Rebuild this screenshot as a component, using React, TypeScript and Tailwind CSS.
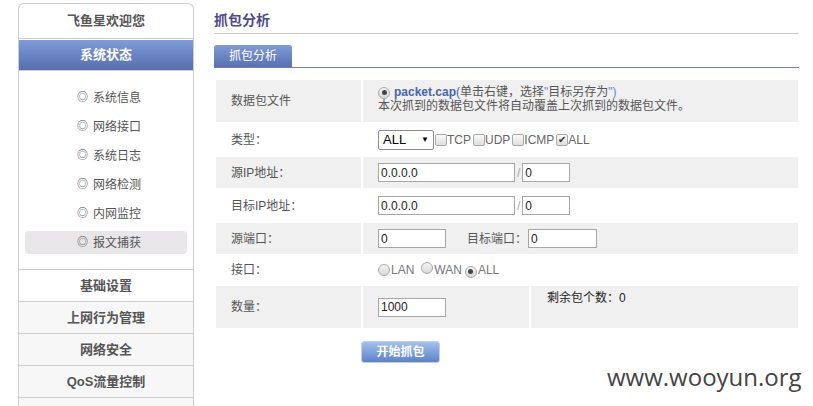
import React from 'react';

const menuItems = ['系统信息', '网络接口', '系统日志', '网络检测', '内网监控', '报文捕获'];
const groups = ['基础设置', '上网行为管理', '网络安全', 'QoS流量控制'];

const Radio = ({ checked = false }: { checked?: boolean }) => (
  <span className="inline-flex w-[12px] h-[12px] rounded-full border border-[#a9a9a9] bg-gradient-to-b from-[#f4f4f4] to-[#d9d9d9] items-center justify-center shrink-0">
    {checked && <span className="w-[5px] h-[5px] rounded-full bg-[#444]" />}
  </span>
);

const Check = ({ checked = false }: { checked?: boolean }) => (
  <span className="inline-flex w-[12px] h-[12px] rounded-[2px] border border-[#a9a9a9] bg-gradient-to-b from-[#fafafa] to-[#dedede] items-center justify-center shrink-0 text-[10px] leading-none text-[#333]">
    {checked && '✔'}
  </span>
);

const Input = ({ value, w }: { value: string; w: string }) => (
  <div className={`${w} h-[19px] border border-[#a6a6a6] bg-white flex items-center pl-[2px] text-[12px] text-[#222] leading-none`}>
    {value}
  </div>
);

const Sidebar = () => (
  <aside className="ml-[18px] mt-[3px] w-[176px] shrink-0 border border-b-0 border-[#cccccc] rounded-t-[6px] bg-white">
    <div className="h-[35px] flex items-center justify-center text-[13px] font-bold text-[#555] border-b border-[#cccccc]">
      飞鱼星欢迎您
    </div>
    <div className="mt-px h-[31px] flex items-center justify-center text-[13px] font-bold text-white bg-gradient-to-b from-[#7f9bda] to-[#566eae] border-b border-[#cfcfcf]">
      系统状态
    </div>
    <div className="pt-[15px] pb-[15px] flex flex-col gap-[6px] border-b border-[#cccccc]">
      {menuItems.map((item) => (
        <div
          key={item}
          className={`mx-[6px] h-[23px] rounded-[4px] flex items-center pl-[52px] gap-[5px] text-[12px] text-[#555] ${
            item === '报文捕获' ? 'bg-[#e8e6e8]' : ''
          }`}
        >
          <span className="text-[11px] text-[#444]">◎</span>
          <span>{item}</span>
        </div>
      ))}
    </div>
    {groups.map((g, i) => (
      <div
        key={g}
        className={`h-[32px] flex items-center justify-center text-[13px] font-bold text-[#555] border-b border-[#cccccc] ${
          i === 0 ? 'bg-white' : 'bg-[#f7f7f7]'
        }`}
      >
        {g}
      </div>
    ))}
    <div className="h-[32px] bg-[#f7f7f7]" />
  </aside>
);

const Label = ({ text }: { text: string }) => (
  <div className="w-[145px] shrink-0 pl-[15px] flex items-center text-[12px] text-[#555]">{text}</div>
);

export default function App() {
  return (
    <div className="w-[813px] h-[406px] overflow-hidden bg-white flex relative font-['Liberation_Sans','Noto_Sans_CJK_SC',sans-serif]">
      <Sidebar />

      <main className="ml-[20px] w-[585px] shrink-0">
        <div className="pt-[12px] pb-[5px] leading-[16px] text-[14px] font-bold text-[#4f4a8c] border-b border-[#cccccc]">
          抓包分析
        </div>

        <div className="mt-[11px] flex items-end border-b border-[#6a7fbf]">
          <div className="w-[78px] h-[22px] rounded-t-[3px] bg-gradient-to-b from-[#7f9bda] to-[#5a70b0] text-white text-[12px] flex items-center justify-center">
            抓包分析
          </div>
        </div>

        <div className="mt-[12px] ml-[2px] w-[582px] flex flex-col">
          {/* file */}
          <div className="h-[42px] flex gap-[2px]">
            <div className="bg-[#f0f0f0] flex"><Label text="数据包文件" /></div>
            <div className="flex-1 bg-[#f0f0f0] pl-[15px] pt-[6px] text-[12px] leading-[13px]">
              <div className="flex items-center gap-[4px]">
                <Radio checked />
                <span>
                  <span className="font-bold text-[#4a64a8]">packet.cap</span>
                  <span className="text-[#4a64a8]">(</span>
                  <span className="text-[#555]">单击右键，选择</span>
                  <span className="text-[#6b86c4]">"</span>
                  <span className="text-[#555]">目标另存为</span>
                  <span className="text-[#6b86c4]">")</span>
                </span>
              </div>
              <div className="text-[#555] mt-[1px]">本次抓到的数据包文件将自动覆盖上次抓到的数据包文件。</div>
            </div>
          </div>

          {/* type */}
          <div className="h-[35px] flex">
            <Label text="类型：" />
            <div className="pl-[17px] flex items-center text-[12px] text-[#666]">
              <div className="w-[56px] h-[20px] border border-[#8a8a8a] rounded-[2px] bg-white flex items-center justify-between px-[4px] text-[13px] text-black">
                <span>ALL</span>
                <span className="text-[8px]">▼</span>
              </div>
              <span className="flex items-center ml-[1px]"><Check />TCP</span>
              <span className="flex items-center ml-[2px]"><Check />UDP</span>
              <span className="flex items-center ml-[2px]"><Check />ICMP</span>
              <span className="flex items-center ml-[2px]"><Check checked />ALL</span>
            </div>
          </div>

          {/* source ip */}
          <div className="h-[31px] flex gap-[2px]">
            <div className="bg-[#f0f0f0] flex"><Label text="源IP地址：" /></div>
            <div className="flex-1 bg-[#f0f0f0] pl-[15px] flex items-center text-[12px]">
              <Input value="0.0.0.0" w="w-[137px]" />
              <span className="mx-[2px] text-[#aaa]">/</span>
              <Input value="0" w="w-[48px]" />
            </div>
          </div>

          {/* dest ip */}
          <div className="h-[35px] flex">
            <Label text="目标IP地址：" />
            <div className="pl-[17px] flex items-center text-[12px]">
              <Input value="0.0.0.0" w="w-[137px]" />
              <span className="mx-[2px] text-[#aaa]">/</span>
              <Input value="0" w="w-[48px]" />
            </div>
          </div>

          {/* ports */}
          <div className="h-[31px] flex gap-[2px]">
            <div className="bg-[#f0f0f0] flex"><Label text="源端口：" /></div>
            <div className="flex-1 bg-[#f0f0f0] pl-[15px] flex items-center text-[12px] text-[#555]">
              <Input value="0" w="w-[68px]" />
              <span className="ml-[21px] mr-[1px]">目标端口：</span>
              <Input value="0" w="w-[69px]" />
            </div>
          </div>

          {/* interface */}
          <div className="h-[32px] flex">
            <Label text="接口：" />
            <div className="pl-[17px] flex items-center text-[12px] text-[#777]">
              <Radio />
              <span className="ml-[1px]">LAN</span>
              <span className="ml-[7px]"><Radio /></span>
              <span className="ml-[1px]">WAN</span>
              <span className="ml-[3px]"><Radio checked /></span>
              <span className="ml-[1px]">ALL</span>
            </div>
          </div>

          {/* count */}
          <div className="h-[42px] flex gap-[2px]">
            <div className="bg-[#f0f0f0] flex"><Label text="数量：" /></div>
            <div className="w-[166px] bg-[#f0f0f0] pl-[15px] flex items-center">
              <Input value="1000" w="w-[68px]" />
            </div>
            <div className="flex-1 bg-[#f0f0f0] pl-[16px] pt-[6px] text-[12px] text-[#222] leading-[13px]">
              剩余包个数：0
            </div>
          </div>
        </div>

        <div className="mt-[11px] ml-[147px]">
          <button className="w-[79px] h-[22px] rounded-[3px] border border-[#c3cfe6] bg-gradient-to-b from-[#a3c1ee] to-[#5c82c9] text-white text-[12px] font-bold">
            开始抓包
          </button>
        </div>
      </main>

      <div className="absolute left-[607px] top-[361px] text-[24px] text-[#444] font-['Open_Sans',sans-serif] leading-[32px]">
        www.wooyun.org
      </div>
    </div>
  );
}
